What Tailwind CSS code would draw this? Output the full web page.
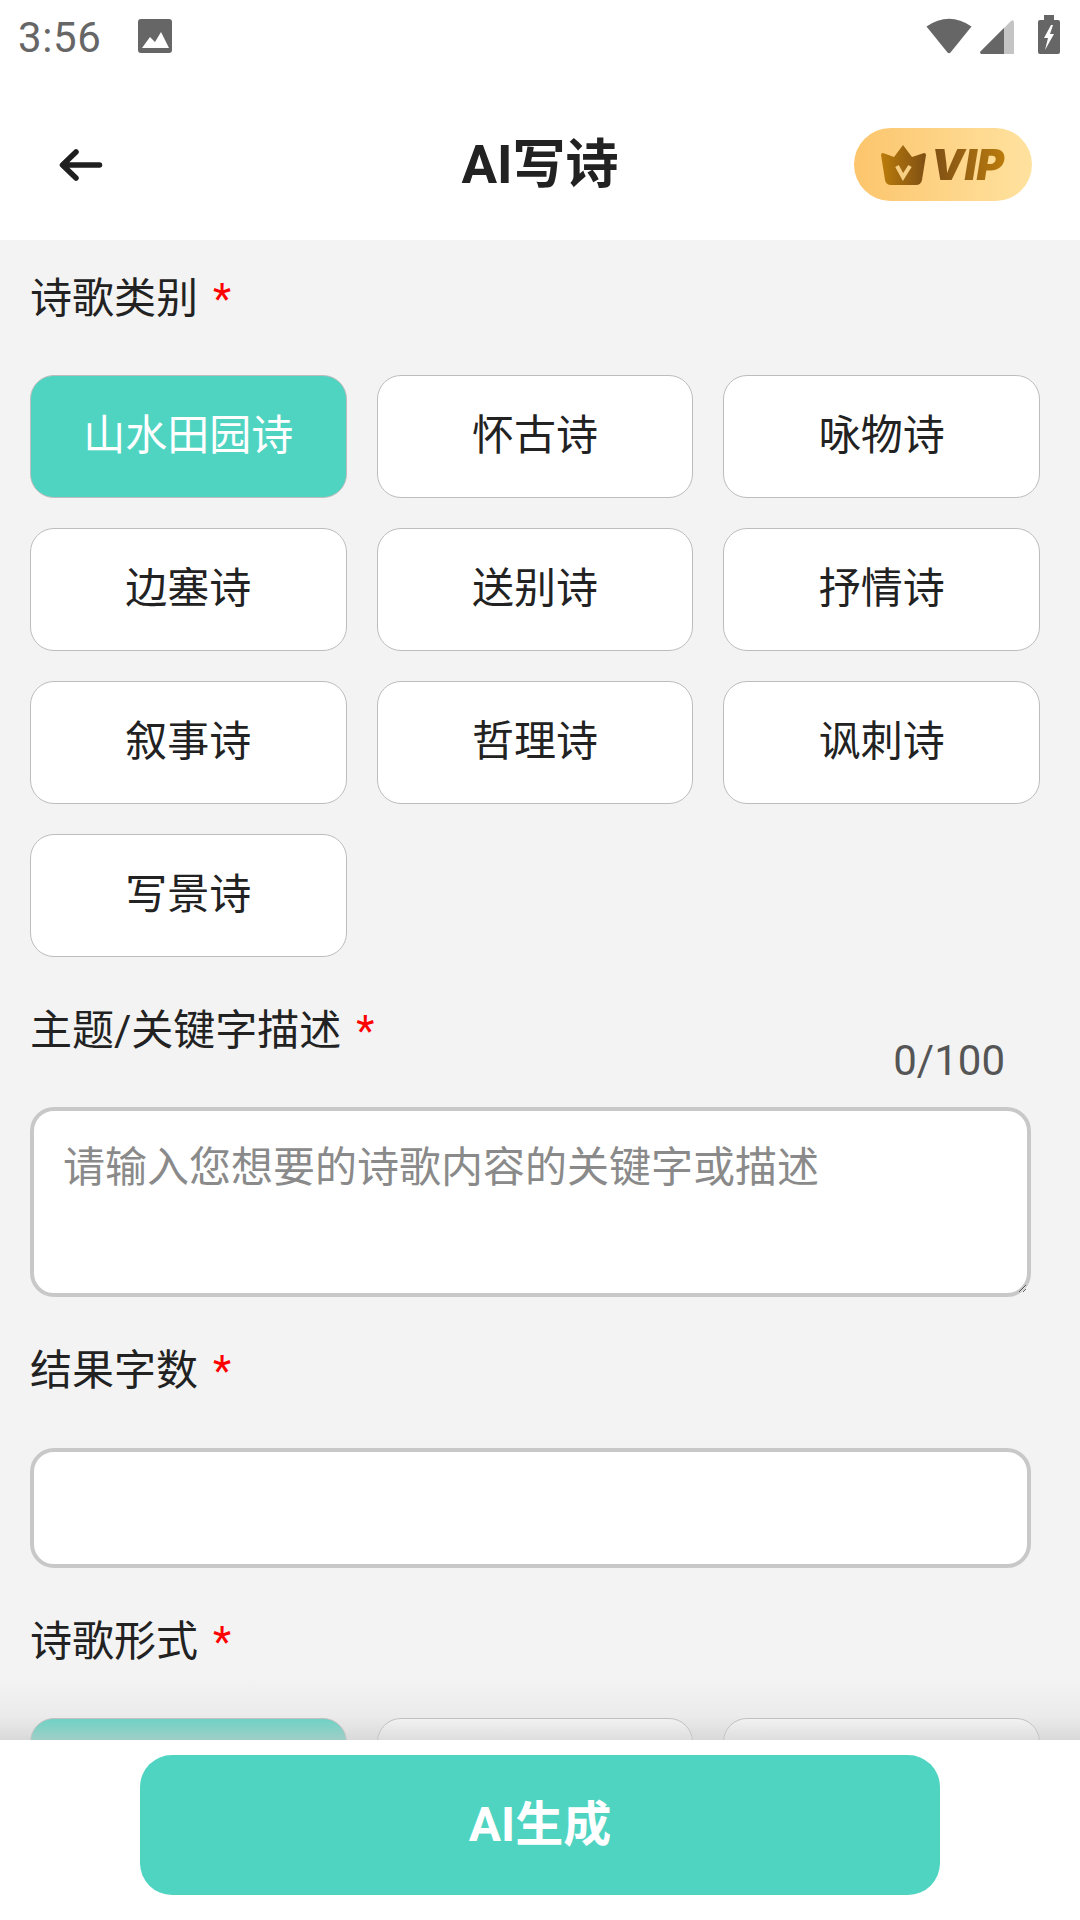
<!DOCTYPE html>
<html lang="zh-CN">
<head>
  <meta charset="UTF-8">
  <meta name="viewport" content="width=device-width, initial-scale=1.0">
  <title>AI写诗</title>
  <script src="https://cdn.jsdelivr.net/npm/@tailwindcss/browser@4"></script>
</head>
<body class="bg-white">
  <div class="w-[1080px] h-[1920px] flex flex-col overflow-hidden font-['Roboto','Noto_Sans_CJK_SC',sans-serif] text-[#222]">

    <!-- status bar -->
    <div class="h-[80px] shrink-0 flex items-start pl-[18px] pr-[20px] pt-[16px] text-[#666]">
      <span class="text-[42px] leading-[44px] tracking-[0.6px]">3:56</span>
      <svg class="ml-[37px] mt-[3px]" width="34" height="34" viewBox="0 0 34 34"><rect width="34" height="34" rx="3" fill="#666"/><path d="M4 29 L12 18 L17 23 L23 13 L31 29 Z" fill="#fff"/></svg>
      <div class="ml-auto -mt-[1px] flex items-start">
        <svg class="mt-[2px]" width="46" height="37" viewBox="0 0 46 37"><path d="M0.5 9.500 Q23 -6 45.500 9.500 L24.500 35.500 Q23 37 21.500 35.500 Z" fill="#666"/></svg>
        <svg class="ml-[8px] mt-[5px]" width="34" height="34" viewBox="0 0 34 34"><path d="M0 32 L31 1 Q34 -1 34 3 L34 34 L1 34 Z" fill="#c4c4c4"/><path d="M0 32 L24 8 L24 34 L1 34 Z" fill="#666"/></svg>
        <svg class="ml-[24px]" width="22" height="39" viewBox="0 0 22 39"><path d="M6 0 H16 V5 H20 Q22 5 22 7 V37 Q22 39 20 39 H2 Q0 39 0 37 V7 Q0 5 2 5 H6 Z" fill="#666"/><path d="M13 10 L6 23 H10 L7 35 L16 19 H12 L15 10 Z" fill="#fff"/></svg>
      </div>
    </div>

    <!-- header -->
    <div class="h-[160px] shrink-0 relative flex items-center justify-center">
      <svg class="absolute left-[58px] top-[68px]" width="46" height="34" viewBox="0 0 46 34" fill="none" stroke="#1f1f1f" stroke-width="5.5" stroke-linecap="round" stroke-linejoin="round"><path d="M41.500 17 H5 M18 4 L4.500 17 L18 30"/></svg>
      <h1 class="text-[53px] leading-none font-bold mt-[11px]">AI写诗</h1>
      <div class="absolute left-[854px] top-[48px] w-[178px] h-[73px] rounded-full bg-gradient-to-r from-[#fcc56c] to-[#ffe29f] flex items-center pl-[27px]">
        <svg width="45" height="40" viewBox="0 0 45 40">
          <defs><linearGradient id="crown"><stop offset="0" stop-color="#bb7c0a"/><stop offset="1" stop-color="#7e4f14"/></linearGradient></defs>
          <path d="M22 0 L31 12 L43 8 Q45 8 45 10 L41 35 Q40 40 35 40 H10 Q5 40 4 35 L0 10 Q0 8 2 8 L13 12 Z" fill="url(#crown)"/>
          <path d="M16 21 L22 32 L29 21" fill="none" stroke="#f6cf85" stroke-width="4"/>
        </svg>
        <span class="ml-[5px] text-[42px] leading-none font-black italic font-['Inter',sans-serif] text-transparent bg-clip-text bg-gradient-to-r from-[#7e4f14] to-[#bb7c0a] pr-[2px]">VIP</span>
      </div>
    </div>

    <!-- form -->
    <div class="flex-1 min-h-0 overflow-hidden bg-[#f3f3f3]">
      <div class="h-[135px] pl-[30px] pt-[31px] text-[42px] leading-[56px] flex">
        诗歌类别<span class="ml-[15px] text-[#f00]">*</span>
      </div>
      <div class="grid grid-cols-3 gap-x-[30px] gap-y-[30px] w-[1010px] ml-[30px] text-[42px]">
        <button class="h-[123px] pb-[2px] rounded-[24px] border border-[#bdbdbd] bg-[#50d4c2] text-white">山水田园诗</button>
        <button class="h-[123px] pb-[2px] rounded-[24px] border border-[#bdbdbd] bg-white">怀古诗</button>
        <button class="h-[123px] pb-[2px] rounded-[24px] border border-[#bdbdbd] bg-white">咏物诗</button>
        <button class="h-[123px] pb-[2px] rounded-[24px] border border-[#bdbdbd] bg-white">边塞诗</button>
        <button class="h-[123px] pb-[2px] rounded-[24px] border border-[#bdbdbd] bg-white">送别诗</button>
        <button class="h-[123px] pb-[2px] rounded-[24px] border border-[#bdbdbd] bg-white">抒情诗</button>
        <button class="h-[123px] pb-[2px] rounded-[24px] border border-[#bdbdbd] bg-white">叙事诗</button>
        <button class="h-[123px] pb-[2px] rounded-[24px] border border-[#bdbdbd] bg-white">哲理诗</button>
        <button class="h-[123px] pb-[2px] rounded-[24px] border border-[#bdbdbd] bg-white">讽刺诗</button>
        <button class="h-[123px] pb-[2px] rounded-[24px] border border-[#bdbdbd] bg-white">写景诗</button>
      </div>

      <div class="h-[150px] pl-[30px] pt-[46px] pr-[75px] flex text-[42px] leading-[56px]">
        主题/关键字描述<span class="ml-[15px] text-[#f00]">*</span>
        <span class="ml-auto mt-[30px] text-[#555] text-[42px] leading-[56px]">0/100</span>
      </div>
      <textarea class="block w-[1001px] h-[190px] ml-[30px] rounded-[24px] border-4 border-[#c8c8c8] bg-white pl-[29px] pr-[30px] py-[29px] text-[42px] leading-[56px] placeholder:text-[#8a8a8a]" placeholder="请输入您想要的诗歌内容的关键字或描述"></textarea>

      <div class="h-[151px] pl-[30px] pt-[46px] text-[42px] leading-[56px] flex">
        结果字数<span class="ml-[15px] text-[#f00]">*</span>
      </div>
      <input class="block w-[1001px] h-[120px] ml-[30px] rounded-[24px] border-4 border-[#c8c8c8] bg-white" type="text">

      <div class="h-[150px] pl-[30px] pt-[46px] text-[42px] leading-[56px] flex">
        诗歌形式<span class="ml-[15px] text-[#f00]">*</span>
      </div>
      <div class="grid grid-cols-3 gap-x-[30px] w-[1010px] ml-[30px]">
        <div class="h-[123px] rounded-[24px] border border-[#bdbdbd] bg-[#50d4c2]"></div>
        <div class="h-[123px] rounded-[24px] border border-[#bdbdbd] bg-white"></div>
        <div class="h-[123px] rounded-[24px] border border-[#bdbdbd] bg-white"></div>
      </div>
    </div>

    <!-- bottom bar -->
    <div class="relative h-[180px] shrink-0 bg-white pt-[15px]">
      <div class="absolute left-0 right-0 -top-[60px] h-[60px] bg-gradient-to-b from-transparent via-[#cbcbcb]/20 via-60% to-[#cbcbcb]/65"></div>
      <button class="block w-[800px] h-[140px] mx-auto rounded-[32px] bg-[#50d4c2] text-white text-[48px] font-bold">AI生成</button>
    </div>
  </div>
</body>
</html>
